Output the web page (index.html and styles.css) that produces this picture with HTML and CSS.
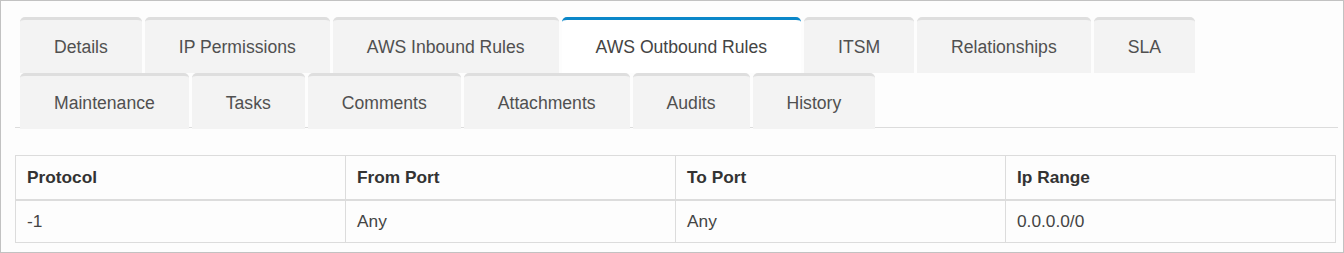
FILE: index.html
```html
<!DOCTYPE html>
<html lang="en">
<head>
    <meta charset="UTF-8">
    <title>Security Group - AWS Outbound Rules</title>
    <link rel="stylesheet" href="styles.css">
</head>
<body>
    <div class="panel">
        <ul class="tabs">
            <li>Details</li>
            <li>IP Permissions</li>
            <li>AWS Inbound Rules</li>
            <li class="active">AWS Outbound Rules</li>
            <li>ITSM</li>
            <li>Relationships</li>
            <li>SLA</li>
            <li>Maintenance</li>
            <li>Tasks</li>
            <li>Comments</li>
            <li>Attachments</li>
            <li>Audits</li>
            <li>History</li>
        </ul>
        <div class="tab-line"></div>

        <table class="rules">
            <thead>
                <tr>
                    <th>Protocol</th>
                    <th>From Port</th>
                    <th>To Port</th>
                    <th>Ip Range</th>
                </tr>
            </thead>
            <tbody>
                <tr>
                    <td>-1</td>
                    <td>Any</td>
                    <td>Any</td>
                    <td>0.0.0.0/0</td>
                </tr>
            </tbody>
        </table>
    </div>
</body>
</html>
```

FILE: styles.css
```css
body {
    margin: 0;
    font-family: 'Liberation Sans', Arial, sans-serif;
    background: #fff;
}
.panel {
    height: 253px;
    box-sizing: border-box;
    border: 1px solid #c2c2c2;
    background: #fdfdfd;
    padding: 16px 5px 0 14px;
}
.tabs {
    display: flex;
    flex-wrap: wrap;
    list-style: none;
    margin: 0;
    padding: 0 0 0 5px;
}
.tabs li {
    position: relative;
    z-index: 1;
    height: 56px;
    box-sizing: border-box;
    margin-right: 3px;
    padding: 0 34px;
    border-top: 3px solid #dedede;
    border-radius: 5px 5px 0 0;
    background: #f3f3f3;
    color: #505050;
    font-size: 17.6px;
    line-height: 55px;
    white-space: nowrap;
}
.tabs li.active {
    background: #fff;
    border-top-color: #0a86c8;
    color: #444;
}
.tab-line {
    height: 1px;
    margin-top: -2px;
    background: #dcdcdc;
}
.rules {
    width: 1321px;
    margin-top: 27px;
    border-collapse: collapse;
    table-layout: fixed;
    border: 1px solid #dcdcdc;
    color: #333;
    font-size: 17.3px;
}
.rules th,
.rules td {
    text-align: left;
    padding: 0 11px;
    border: 1px solid #dcdcdc;
}
.rules th {
    height: 43px;
    font-weight: bold;
    border-bottom-width: 2px;
}
.rules td {
    height: 41px;
    color: #444;
}
```
